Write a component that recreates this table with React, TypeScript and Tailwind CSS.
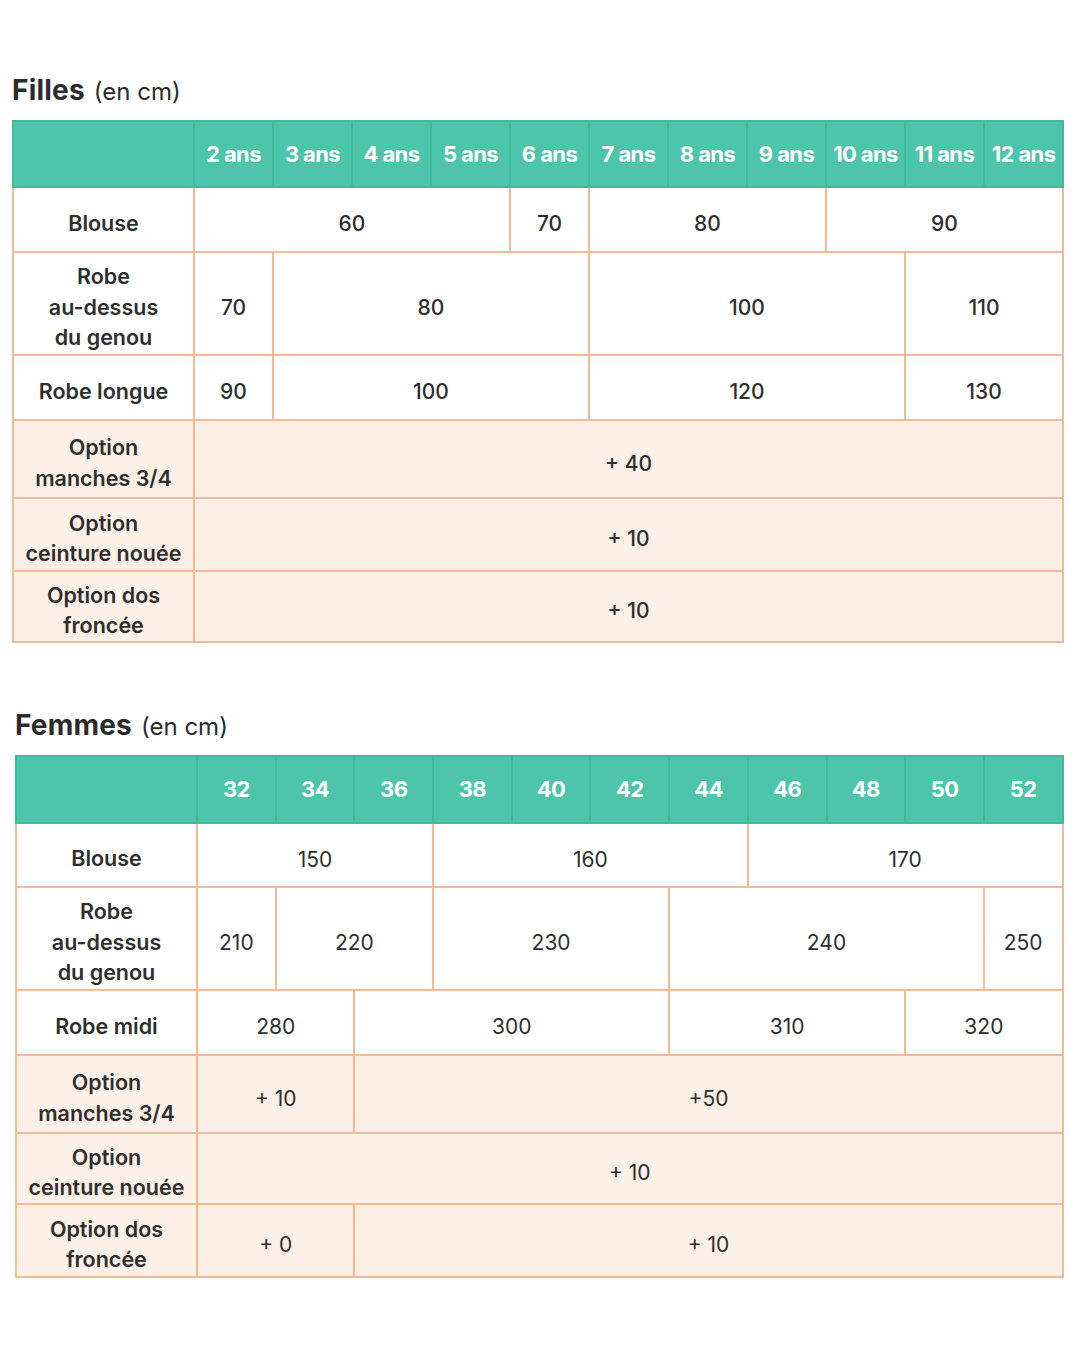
import React from "react";

type Cell = { v: string; span: number };
type Row = { label: string[]; cells: Cell[]; h: number; peach?: boolean };

const font = { fontFamily: "Inter, 'Noto Sans', sans-serif" };

function SizeTable({
  title,
  headers,
  rows,
  valueBold,
  labelW,
  colW,
  headerH,
}: {
  title: string;
  headers: string[];
  rows: Row[];
  valueBold: boolean;
  labelW: number;
  colW: number;
  headerH: number;
}) {
  return (
    <div>
      <div className="text-[#2b2b2b] mb-[16px] leading-none flex items-baseline gap-[9px]">
        <span className="text-[28px] font-bold tracking-[0.2px]">{title}</span>
        <span className="text-[24px] font-normal">(en cm)</span>
      </div>
      <table className="table-fixed border-collapse" style={{ width: labelW + colW * 11 }}>
        <colgroup>
          <col style={{ width: labelW }} />
          {headers.map((_, i) => (
            <col key={i} style={{ width: colW }} />
          ))}
        </colgroup>
        <thead>
          <tr style={{ height: headerH }}>
            <th className="bg-[#4dc5aa] border-2 border-[#3fbb9b]"></th>
            {headers.map((h) => (
              <th
                key={h}
                className="bg-[#4dc5aa] border-2 border-[#3fbb9b] text-white text-[22px] font-bold tracking-[-0.6px] whitespace-nowrap px-0"
              >
                {h}
              </th>
            ))}
          </tr>
        </thead>
        <tbody>
          {rows.map((r, i) => (
            <tr key={i} style={{ height: r.h }} className={r.peach ? "bg-[#fdf0e7]" : "bg-white"}>
              <td className="border-2 border-[#f2ba97] text-center text-[21.5px] leading-[30.5px] font-semibold text-[#2e2e2e] px-0 pt-[7px] pb-0">
                {r.label.map((l, j) => (
                  <div key={j} className="whitespace-nowrap">
                    {l}
                  </div>
                ))}
              </td>
              {r.cells.map((c, j) => (
                <td
                  key={j}
                  colSpan={c.span}
                  className={
                    "border-2 border-[#f2ba97] text-center text-[21px] leading-[26px] text-[#2e2e2e] pt-[9px] " +
                    (valueBold ? "font-medium" : "font-normal")
                  }
                >
                  {c.v}
                </td>
              ))}
            </tr>
          ))}
        </tbody>
      </table>
    </div>
  );
}

export default function App() {
  const filles: Row[] = [
    { label: ["Blouse"], h: 65, cells: [{ v: "60", span: 4 }, { v: "70", span: 1 }, { v: "80", span: 3 }, { v: "90", span: 3 }] },
    { label: ["Robe", "au-dessus", "du genou"], h: 103, cells: [{ v: "70", span: 1 }, { v: "80", span: 4 }, { v: "100", span: 4 }, { v: "110", span: 2 }] },
    { label: ["Robe longue"], h: 65, cells: [{ v: "90", span: 1 }, { v: "100", span: 4 }, { v: "120", span: 4 }, { v: "130", span: 2 }] },
    { label: ["Option", "manches 3/4"], h: 78, peach: true, cells: [{ v: "+ 40", span: 11 }] },
    { label: ["Option", "ceinture nouée"], h: 73, peach: true, cells: [{ v: "+ 10", span: 11 }] },
    { label: ["Option dos", "froncée"], h: 71, peach: true, cells: [{ v: "+ 10", span: 11 }] },
  ];
  const femmes: Row[] = [
    { label: ["Blouse"], h: 64, cells: [{ v: "150", span: 3 }, { v: "160", span: 4 }, { v: "170", span: 4 }] },
    { label: ["Robe", "au-dessus", "du genou"], h: 103, cells: [{ v: "210", span: 1 }, { v: "220", span: 2 }, { v: "230", span: 3 }, { v: "240", span: 4 }, { v: "250", span: 1 }] },
    { label: ["Robe midi"], h: 65, cells: [{ v: "280", span: 2 }, { v: "300", span: 4 }, { v: "310", span: 3 }, { v: "320", span: 2 }] },
    { label: ["Option", "manches 3/4"], h: 78, peach: true, cells: [{ v: "+ 10", span: 2 }, { v: "+50", span: 9 }] },
    { label: ["Option", "ceinture nouée"], h: 71, peach: true, cells: [{ v: "+ 10", span: 11 }] },
    { label: ["Option dos", "froncée"], h: 73, peach: true, cells: [{ v: "+ 0", span: 2 }, { v: "+ 10", span: 9 }] },
  ];
  return (
    <div className="w-[1080px] h-[1350px] bg-white" style={font}>
      <div className="pt-[76px] pl-[12px]">
        <SizeTable
          title="Filles"
          headers={["2 ans", "3 ans", "4 ans", "5 ans", "6 ans", "7 ans", "8 ans", "9 ans", "10 ans", "11 ans", "12 ans"]}
          rows={filles}
          valueBold={true}
          labelW={181}
          colW={79}
          headerH={66}
        />
      </div>
      <div className="pt-[68px] pl-[15px]">
        <SizeTable
          title="Femmes"
          headers={["32", "34", "36", "38", "40", "42", "44", "46", "48", "50", "52"]}
          rows={femmes}
          valueBold={false}
          labelW={181}
          colW={78.7}
          headerH={67}
        />
      </div>
    </div>
  );
}
